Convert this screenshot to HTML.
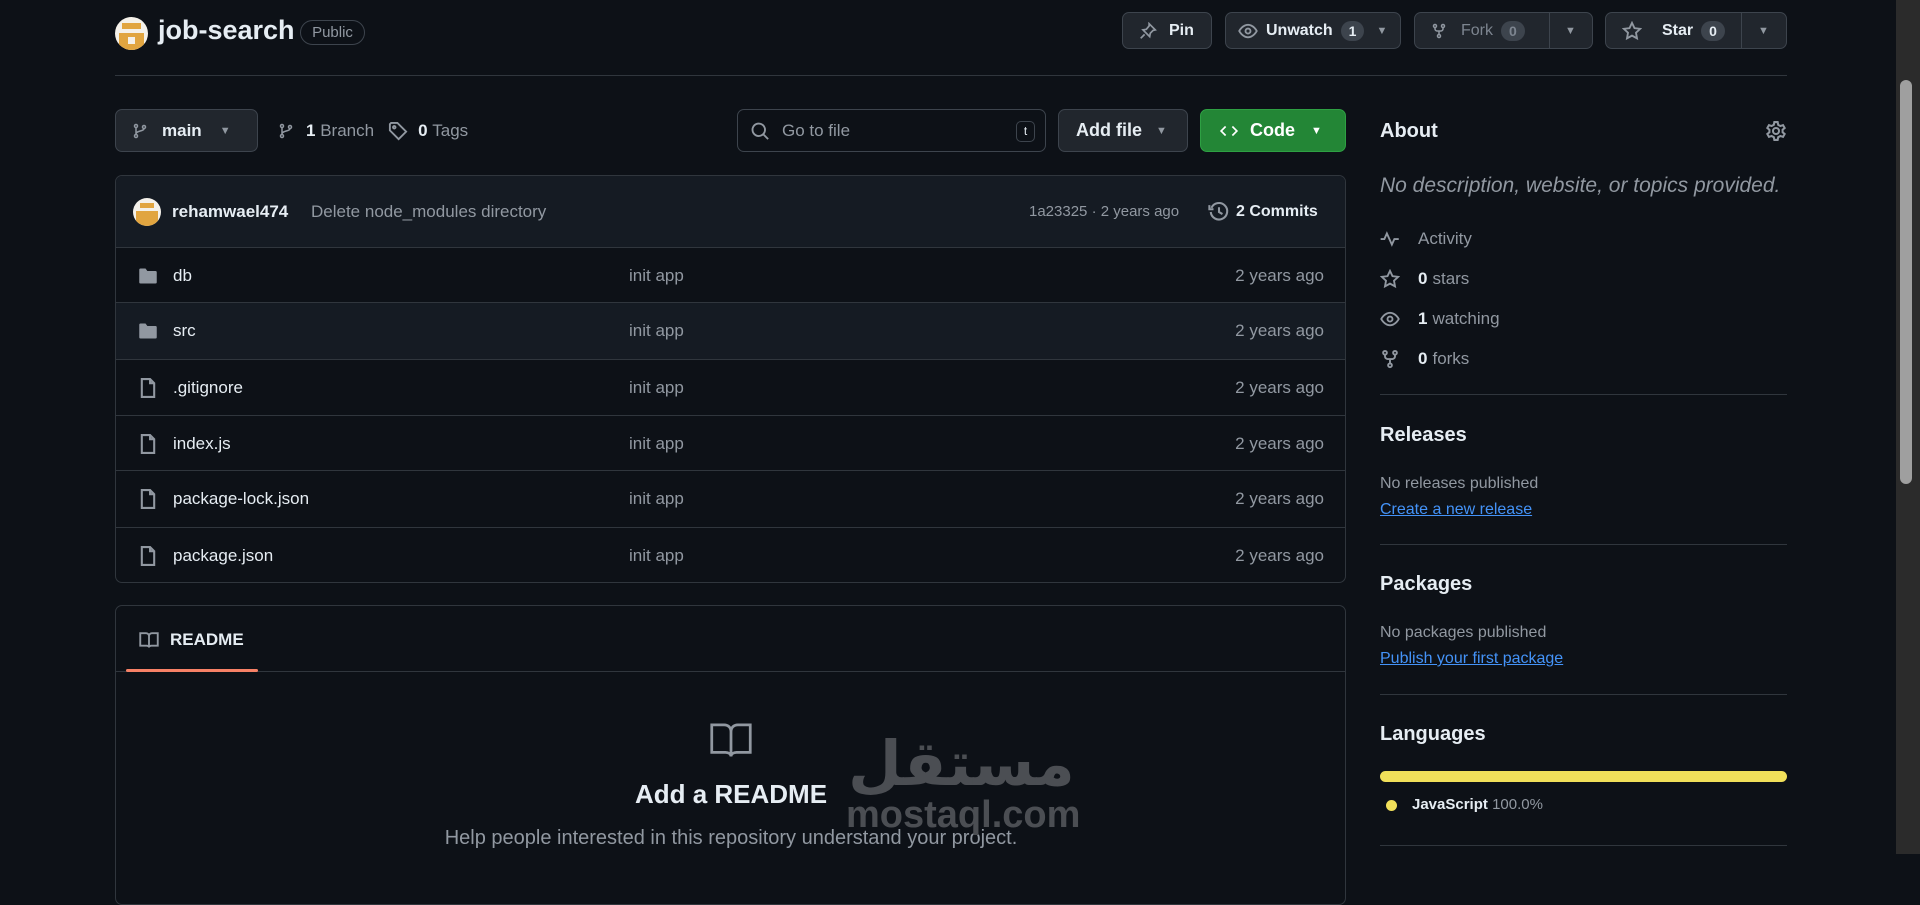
<!DOCTYPE html>
<html><head><meta charset="utf-8">
<style>
*{box-sizing:border-box;margin:0;padding:0}
body{width:1920px;height:854px;overflow:hidden;background:#0d1117;color:#e6edf3;font-family:"Liberation Sans",sans-serif;font-size:17px;position:relative}
.a{position:absolute}
.btn{position:absolute;background:#21262d;border:1px solid #3d444d;border-radius:7px;display:flex;align-items:center;color:#e6edf3;font-weight:bold;font-size:16px}
.cnt{background:#3d444d;border-radius:12px;padding:2px 8px;font-size:14px;margin-left:8px}
.muted{color:#9198a1}
.row{position:absolute;left:115px;width:1231px;height:56px;border-top:1px solid #30363d;display:flex;align-items:center}
.row .ic{position:absolute;left:22px}
.row .n{position:absolute;left:58px}
.row .m{position:absolute;left:514px;color:#9198a1}
.row .d{position:absolute;right:22px;color:#9198a1}
.sb{position:absolute;left:1380px;display:flex;align-items:center;color:#9198a1;font-size:17px}
.sb b{color:#e6edf3;margin-right:5px}
.sb svg{margin-right:18px}
.hr{position:absolute;left:1380px;width:407px;height:1px;background:#30363d}
.h{position:absolute;left:1380px;font-size:20px;font-weight:bold}
.lk{color:#4493f8;text-decoration:underline;font-size:16px}
svg{fill:none;stroke:#9198a1;stroke-width:1.5}
</style></head><body>
<!-- avatar -->
<div class="a" style="left:115px;top:17px;width:33px;height:33px;border-radius:50%;background:#f4f1ea;overflow:hidden">
<div class="a" style="left:7px;top:6px;width:19px;height:6px;background:#e1a540"></div>
<div class="a" style="left:4px;top:16px;width:25px;height:17px;background:#e1a540"></div>
<div class="a" style="left:13px;top:20px;width:7px;height:7px;background:#f4f1ea"></div>
</div>
<div class="a" style="left:158px;top:15px;font-size:27px;font-weight:bold">job-search</div>
<div class="a" style="left:300px;top:20px;width:65px;height:25px;border:1px solid #3d444d;border-radius:13px;font-size:15px;color:#9198a1;text-align:center;line-height:23px">Public</div>

<div class="btn" style="left:1122px;top:12px;width:90px;height:37px;padding-left:16px"><svg width="18" height="18" viewBox="0 0 16 16"><path d="M9 1.5l5.5 5.5-2 .5-2.5 2.5-.5 3-6-6 3-.5L9 3.5z M5 11l-3.5 3.5"/></svg><span style="margin-left:12px">Pin</span></div>
<div class="btn" style="left:1225px;top:12px;width:176px;height:37px;padding-left:12px"><svg width="20" height="20" viewBox="0 0 16 16"><path d="M1 8s2.5-5 7-5 7 5 7 5-2.5 5-7 5-7-5-7-5z"/><circle cx="8" cy="8" r="2"/></svg><span style="margin-left:8px">Unwatch</span><span class="cnt">1</span><span style="margin-left:12px;font-size:11px;color:#9198a1">▼</span></div>
<div class="btn" style="left:1414px;top:12px;width:179px;height:37px;padding-left:16px;color:#7d8590"><svg width="16" height="18" viewBox="0 0 16 16"><circle cx="4" cy="3" r="1.5"/><circle cx="12" cy="3" r="1.5"/><circle cx="8" cy="13" r="1.5"/><path d="M4 4.5v1.5c0 1 1 2 2 2h4c1 0 2-1 2-2V4.5M8 8v3.5"/></svg><span style="margin-left:14px;font-weight:normal">Fork</span><span class="cnt" style="color:#7d8590">0</span><div class="a" style="left:134px;top:0;width:1px;height:35px;background:#3d444d"></div><span class="a" style="left:150px;top:12px;font-size:11px;color:#9198a1">▼</span></div>
<div class="btn" style="left:1605px;top:12px;width:182px;height:37px;padding-left:16px"><svg width="20" height="20" viewBox="0 0 16 16"><path d="M8 1.5l2 4.2 4.5.6-3.3 3.1.8 4.5L8 11.7l-4 2.2.8-4.5L1.5 6.3 6 5.7z"/></svg><span style="margin-left:20px">Star</span><span class="cnt">0</span><div class="a" style="left:135px;top:0;width:1px;height:35px;background:#3d444d"></div><span class="a" style="left:152px;top:12px;font-size:11px;color:#9198a1">▼</span></div>
<div class="a" style="left:115px;top:75px;width:1672px;height:1px;background:#30363d"></div>

<div class="btn" style="left:115px;top:109px;width:143px;height:43px;padding-left:16px"><svg width="16" height="18" viewBox="0 0 16 16"><circle cx="4" cy="3" r="1.5"/><circle cx="4" cy="13" r="1.5"/><circle cx="12" cy="4" r="1.5"/><path d="M4 4.5v7M12 5.5c0 3-8 2-8 5.5"/></svg><span style="margin-left:14px;font-size:17px">main</span><span style="margin-left:18px;font-size:11px;color:#9198a1">▼</span></div>
<div class="a" style="left:278px;top:121px;display:flex;align-items:center;font-size:17px;color:#9198a1"><svg width="16" height="20" viewBox="0 0 16 16"><circle cx="4" cy="3" r="1.5"/><circle cx="4" cy="13" r="1.5"/><circle cx="12" cy="4" r="1.5"/><path d="M4 4.5v7M12 5.5c0 3-8 2-8 5.5"/></svg><b style="color:#e6edf3;margin-left:12px">1</b>&nbsp;Branch<svg style="margin-left:14px" width="20" height="20" viewBox="0 0 16 16"><path d="M1.5 2.5v5l7 7 6-6-7-7h-5z"/><circle cx="5" cy="5" r="1"/></svg><b style="color:#e6edf3;margin-left:10px">0</b>&nbsp;Tags</div>

<div class="a" style="left:737px;top:109px;width:309px;height:43px;border:1px solid #3d444d;border-radius:7px;display:flex;align-items:center;padding-left:12px;color:#9198a1"><svg width="20" height="20" viewBox="0 0 16 16"><circle cx="7" cy="7" r="5"/><path d="M10.5 10.5l4 4"/></svg><span style="margin-left:12px">Go to file</span><span class="a" style="right:10px;top:11px;width:19px;height:21px;border:1px solid #3d444d;border-radius:5px;font-size:12px;text-align:center;line-height:18px;color:#e6edf3">t</span></div>
<div class="btn" style="left:1058px;top:109px;width:130px;height:43px;padding-left:17px;font-size:18px">Add file<span style="margin-left:14px;font-size:11px;color:#9198a1">▼</span></div>
<div class="btn" style="left:1200px;top:109px;width:146px;height:43px;padding-left:17px;font-size:18px;background:#238636;border-color:#2ea043;color:#fff"><svg width="22" height="18" viewBox="0 0 16 16" style="stroke:#fff"><path d="M5 4L1 8l4 4M11 4l4 4-4 4"/></svg><span style="margin-left:10px">Code</span><span style="margin-left:16px;font-size:11px">▼</span></div>

<!-- file box -->
<div class="a" style="left:115px;top:175px;width:1231px;height:408px;border:1px solid #30363d;border-radius:7px;overflow:hidden">
<div style="height:72px;background:#151b23"></div>
<div style="position:absolute;top:127px;width:100%;height:56px;background:#151b23"></div>
</div>
<div class="a" style="left:133px;top:198px;width:28px;height:28px;border-radius:50%;background:#f4f1ea;overflow:hidden"><div class="a" style="left:3px;top:13px;width:22px;height:15px;background:#e1a540"></div><div class="a" style="left:7px;top:5px;width:14px;height:5px;background:#e1a540"></div></div>
<div class="a" style="left:172px;top:202px;font-weight:bold;font-size:17px">rehamwael474</div>
<div class="a muted" style="left:311px;top:202px">Delete node_modules directory</div>
<div class="a muted" style="left:1029px;top:203px;font-size:15px">1a23325 · 2 years ago</div>
<div class="a" style="left:1208px;top:201px;display:flex;align-items:center;font-weight:bold;font-size:16px"><svg width="22" height="22" viewBox="0 0 16 16"><path d="M2.5 5A6 6 0 1 1 2 8M1 3v3h3M8 4.5V8l2.5 1.5"/></svg><span style="margin-left:6px">2 Commits</span></div>

<div class="row" style="top:247px"><svg class="ic" width="22" height="20" viewBox="0 0 16 16" style="fill:#9198a1;stroke:none"><path d="M1 3a1 1 0 0 1 1-1h4l1.5 2H14a1 1 0 0 1 1 1v8a1 1 0 0 1-1 1H2a1 1 0 0 1-1-1z"/></svg><span class="n">db</span><span class="m">init app</span><span class="d">2 years ago</span></div>
<div class="row" style="top:302px"><svg class="ic" width="22" height="20" viewBox="0 0 16 16" style="fill:#9198a1;stroke:none"><path d="M1 3a1 1 0 0 1 1-1h4l1.5 2H14a1 1 0 0 1 1 1v8a1 1 0 0 1-1 1H2a1 1 0 0 1-1-1z"/></svg><span class="n">src</span><span class="m">init app</span><span class="d">2 years ago</span></div>
<div class="row" style="top:359px"><svg class="ic" width="22" height="22" viewBox="0 0 16 16"><path d="M3.5 1.5h6l3 3v10h-9z M9.5 1.5v3h3"/></svg><span class="n">.gitignore</span><span class="m">init app</span><span class="d">2 years ago</span></div>
<div class="row" style="top:415px"><svg class="ic" width="22" height="22" viewBox="0 0 16 16"><path d="M3.5 1.5h6l3 3v10h-9z M9.5 1.5v3h3"/></svg><span class="n">index.js</span><span class="m">init app</span><span class="d">2 years ago</span></div>
<div class="row" style="top:470px"><svg class="ic" width="22" height="22" viewBox="0 0 16 16"><path d="M3.5 1.5h6l3 3v10h-9z M9.5 1.5v3h3"/></svg><span class="n">package-lock.json</span><span class="m">init app</span><span class="d">2 years ago</span></div>
<div class="row" style="top:527px"><svg class="ic" width="22" height="22" viewBox="0 0 16 16"><path d="M3.5 1.5h6l3 3v10h-9z M9.5 1.5v3h3"/></svg><span class="n">package.json</span><span class="m">init app</span><span class="d">2 years ago</span></div>

<!-- readme -->
<div class="a" style="left:115px;top:605px;width:1231px;height:300px;border:1px solid #30363d;border-radius:7px"></div>
<div class="a" style="left:116px;top:671px;width:1229px;height:1px;background:#30363d"></div>
<div class="a" style="left:126px;top:669px;width:132px;height:3px;background:#f78166;border-radius:2px"></div>
<div class="a" style="left:138px;top:630px;display:flex;align-items:center;font-weight:bold;font-size:17px"><svg width="22" height="20" viewBox="0 0 16 16"><path d="M1 2.5h4.5c1.5 0 2.5 1 2.5 2.5v9c0-1-1-1.5-2-1.5H1zM15 2.5h-4.5C9 2.5 8 3.5 8 5v9c0-1 1-1.5 2-1.5h5z"/></svg><span style="margin-left:10px">README</span></div>
<svg class="a" style="left:709px;top:722px" width="44" height="36" viewBox="0 0 16 13"><path d="M1 1h4.5C7 1 8 2 8 3.5v9c0-1-1-1.5-2-1.5H1zM15 1h-4.5C9 1 8 2 8 3.5v9c0-1 1-1.5 2-1.5h5z" stroke-width="1"/></svg>
<div class="a" style="left:560px;top:779px;width:342px;text-align:center;font-size:26px;font-weight:bold">Add a README</div>
<div class="a muted" style="left:380px;top:827px;width:702px;text-align:center;font-size:20px">Help people interested in this repository understand your project.</div>
<div class="a" style="left:848px;top:733px;font-family:'DejaVu Sans',sans-serif;font-size:62px;font-weight:bold;color:#4b4e53;line-height:1">مستقل</div>
<div class="a" style="left:846px;top:796px;font-size:38px;font-weight:bold;color:#4b4e53;line-height:1">mostaql.com</div>

<!-- sidebar -->
<div class="h" style="top:120px">About</div>
<svg class="a" style="left:1765px;top:120px" width="22" height="22" viewBox="0 0 16 16"><circle cx="8" cy="8" r="2.2"/><path d="M6.8 1.5h2.4l.4 2 1.6.9 1.9-.7 1.2 2.1-1.5 1.3v1.8l1.5 1.3-1.2 2.1-1.9-.7-1.6.9-.4 2H6.8l-.4-2-1.6-.9-1.9.7-1.2-2.1 1.5-1.3V7.1L1.7 5.8l1.2-2.1 1.9.7 1.6-.9z"/></svg>
<div class="a muted" style="left:1380px;top:174px;font-size:21px;font-style:italic">No description, website, or topics provided.</div>
<div class="sb" style="top:229px"><svg width="20" height="20" viewBox="0 0 16 16"><path d="M0.5 8h3l2-4.5 4 9 2-4.5h3.5"/></svg>Activity</div>
<div class="sb" style="top:269px"><svg width="20" height="20" viewBox="0 0 16 16"><path d="M8 1.5l2 4.2 4.5.6-3.3 3.1.8 4.5L8 11.7l-4 2.2.8-4.5L1.5 6.3 6 5.7z"/></svg><b>0</b>stars</div>
<div class="sb" style="top:309px"><svg width="20" height="20" viewBox="0 0 16 16"><path d="M1 8s2.5-5 7-5 7 5 7 5-2.5 5-7 5-7-5-7-5z"/><circle cx="8" cy="8" r="2"/></svg><b>1</b>watching</div>
<div class="sb" style="top:349px"><svg width="20" height="20" viewBox="0 0 16 16"><circle cx="4" cy="3" r="1.5"/><circle cx="12" cy="3" r="1.5"/><circle cx="8" cy="13" r="1.5"/><path d="M4 4.5v1.5c0 1 1 2 2 2h4c1 0 2-1 2-2V4.5M8 8v3.5"/></svg><b>0</b>forks</div>
<div class="hr" style="top:394px"></div>
<div class="h" style="top:424px">Releases</div>
<div class="a muted" style="left:1380px;top:475px;font-size:16px">No releases published</div>
<div class="a lk" style="left:1380px;top:501px">Create a new release</div>
<div class="hr" style="top:544px"></div>
<div class="h" style="top:573px">Packages</div>
<div class="a muted" style="left:1380px;top:624px;font-size:16px">No packages published</div>
<div class="a lk" style="left:1380px;top:650px">Publish your first package</div>
<div class="hr" style="top:694px"></div>
<div class="h" style="top:723px">Languages</div>
<div class="a" style="left:1380px;top:771px;width:407px;height:11px;background:#f1e05a;border-radius:6px"></div>
<div class="a" style="left:1386px;top:800px;width:11px;height:11px;border-radius:50%;background:#f1e05a"></div>
<div class="a" style="left:1412px;top:796px;font-size:15px"><b>JavaScript</b> <span class="muted">100.0%</span></div>
<div class="hr" style="top:845px"></div>

<!-- scrollbar -->
<div class="a" style="left:1896px;top:0;width:24px;height:854px;background:#2b2b2b"></div>
<div class="a" style="left:1900px;top:80px;width:12px;height:404px;background:#9f9f9f;border-radius:6px"></div>
</body></html>
